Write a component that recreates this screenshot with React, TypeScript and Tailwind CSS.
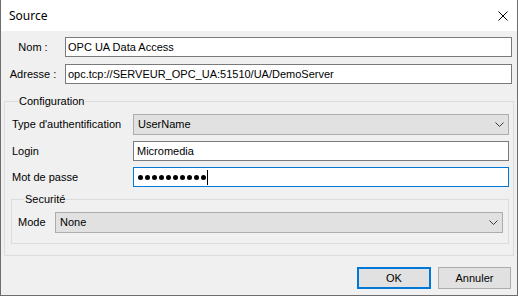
import React from "react";

const Chevron = () => (
  <svg width="9" height="5" viewBox="0 0 9 5" className="block">
    <polyline points="0.5,0.5 4.5,4.5 8.5,0.5" fill="none" stroke="#3a3a3a" strokeWidth="1" />
  </svg>
);

const Select = ({ text, w }: { text: string; w: string }) => (
  <div className={`${w} h-[21px] flex items-center justify-between bg-[#e1e1e1] border border-[#adadad] pl-[4px] pr-[4px]`}>
    <span>{text}</span>
    <Chevron />
  </div>
);

export default function App() {
  return (
    <div
      className="w-[518px] h-[296px] flex flex-col border-x border-b border-[#6d6d6d] text-[11px] leading-[13px] text-black bg-[#f0f0f0]"
      style={{ fontFamily: '"Liberation Sans", Arial, sans-serif' }}
    >
      {/* Title bar */}
      <div className="h-[31px] bg-white flex items-center justify-between pl-[8px] pr-[9px] shrink-0">
        <span className="text-[12px]" style={{ fontFamily: '"Noto Sans", "Liberation Sans", sans-serif' }}>
          Source
        </span>
        <svg width="10" height="10" viewBox="0 0 10 10" className="block">
          <line x1="0.5" y1="0.5" x2="9.5" y2="9.5" stroke="#000" strokeWidth="1" />
          <line x1="9.5" y1="0.5" x2="0.5" y2="9.5" stroke="#000" strokeWidth="1" />
        </svg>
      </div>

      {/* Body */}
      <div className="flex-1 flex flex-col pt-[6px]">
        <div className="flex items-center">
          <div className="w-[64px] text-center">Nom :</div>
          <div className="w-[447px] h-[20px] bg-white border border-[#7a7a7a] pl-[2px] flex items-center">
            OPC UA Data Access
          </div>
        </div>
        <div className="flex items-center mt-[7px]">
          <div className="w-[64px] text-center">Adresse :</div>
          <div className="w-[447px] h-[20px] bg-white border border-[#7a7a7a] pl-[2px] flex items-center">
            opc.tcp://SERVEUR_OPC_UA:51510/UA/DemoServer
          </div>
        </div>

        {/* Configuration */}
        <fieldset className="mx-[3px] mt-[11px] border border-[#dcdcdc] pl-[7px] pr-[4px] pb-[11px]">
          <legend className="ml-[6px] px-[1px] leading-[13px]">Configuration</legend>
          <div className="flex items-center mt-[6px]">
            <div className="w-[121px]">Type d'authentification</div>
            <Select text="UserName" w="w-[376px]" />
          </div>
          <div className="flex items-center mt-[6px]">
            <div className="w-[121px]">Login</div>
            <div className="w-[376px] h-[20px] bg-white border border-[#7a7a7a] pl-[3px] flex items-center">
              Micromedia
            </div>
          </div>
          <div className="flex items-center mt-[6px]">
            <div className="w-[121px]">Mot de passe</div>
            <div className="w-[376px] h-[20px] bg-white border border-[#0078d7] pl-[4px] flex items-center">
              <div className="flex gap-[2px]">
                {Array.from({ length: 10 }).map((_, i) => (
                  <div key={i} className="w-[5px] h-[5px] rounded-full bg-black" />
                ))}
              </div>
              <div className="w-[1px] h-[15px] bg-black ml-[1px]" />
            </div>
          </div>

          {/* Securité */}
          <fieldset className="-ml-[1px] mt-[6px] border border-[#dcdcdc] pl-[6px] pr-[5px] pb-[10px]">
            <legend className="ml-[6px] px-[1px] leading-[13px]">Securité</legend>
            <div className="flex items-center mt-[6px]">
              <div className="w-[37px]">Mode</div>
              <Select text="None" w="w-[448px]" />
            </div>
          </fieldset>
        </fieldset>

        {/* Buttons */}
        <div className="flex justify-end gap-[7px] mt-[11px] pr-[6px]">
          <div className="w-[74px] h-[22px] bg-[#e1e1e1] border-2 border-[#0078d7] flex items-center justify-center">
            OK
          </div>
          <div className="w-[73px] h-[22px] bg-[#e1e1e1] border border-[#adadad] flex items-center justify-center">
            Annuler
          </div>
        </div>
      </div>
    </div>
  );
}
